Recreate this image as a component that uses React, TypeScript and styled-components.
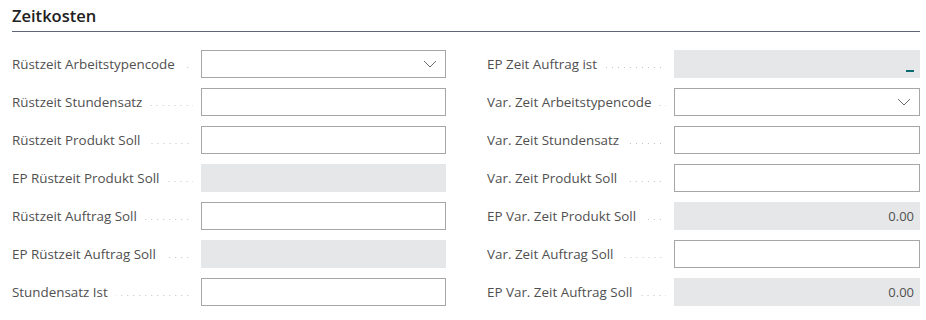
import React from "react";
import styled, { createGlobalStyle } from "styled-components";

const Global = createGlobalStyle`
  html, body { margin: 0; padding: 0; background: #ffffff; }
  body { font-family: "Segoe UI", "Open Sans", "Noto Sans", sans-serif; }
`;

const Page = styled.div`
  width: 926px;
  padding: 0 6px 0 12px;
  box-sizing: border-box;
`;

const Header = styled.div`
  padding-top: 5px;
  height: 26px;
  border-bottom: 1px solid #5c6675;
  box-sizing: content-box;
`;

const Title = styled.h2`
  margin: 0;
  font-size: 16.5px;
  font-weight: 600;
  color: #212121;
  line-height: 22px;
`;

const Columns = styled.div`
  display: grid;
  grid-template-columns: 434px 433px;
  column-gap: 41px;
  padding-top: 18px;
`;

const Column = styled.div`
  display: flex;
  flex-direction: column;
  gap: 10px;
`;

const Row = styled.div<{ $labelWidth: number }>`
  display: grid;
  grid-template-columns: ${(p) => p.$labelWidth}px 1fr;
  height: 28px;
  align-items: center;
`;

const Label = styled.div`
  display: flex;
  align-items: baseline;
  padding-right: 8px;
  font-size: 13.4px;
  color: #505050;
  white-space: nowrap;
  overflow: hidden;
`;

const LabelText = styled.span`
  flex: none;
`;

const Leader = styled.span`
  flex: 1;
  height: 1px;
  margin-left: 8px;
  background-image: linear-gradient(to right, #c2c2c2 1px, transparent 1px);
  background-size: 6px 1px;
  background-repeat: repeat-x;
  background-position: right bottom;
  align-self: center;
  transform: translateY(3px);
`;

const Field = styled.div<{ $disabled?: boolean }>`
  height: 28px;
  box-sizing: border-box;
  display: flex;
  align-items: center;
  justify-content: flex-end;
  padding: 0 6px;
  font-size: 13px;
  color: #505050;
  background: ${(p) => (p.$disabled ? "#e6e7e8" : "#ffffff")};
  border: ${(p) => (p.$disabled ? "none" : "1px solid #a6a6a6")};
`;

const Dash = styled.span`
  display: block;
  width: 8px;
  height: 2px;
  background: #0b6a73;
  margin-top: 14px;
`;

const Chevron = () => (
  <svg width="14" height="8" viewBox="0 0 14 8" style={{ marginRight: 2 }}>
    <path d="M1 1 L7 7 L13 1" fill="none" stroke="#6b6b6b" strokeWidth="1" />
  </svg>
);

type Kind = "input" | "select" | "disabled" | "value" | "dash";
type F = { label: string; kind: Kind; value?: string };

const left: F[] = [
  { label: "Rüstzeit Arbeitstypencode", kind: "select" },
  { label: "Rüstzeit Stundensatz", kind: "input" },
  { label: "Rüstzeit Produkt Soll", kind: "input" },
  { label: "EP Rüstzeit Produkt Soll", kind: "disabled" },
  { label: "Rüstzeit Auftrag Soll", kind: "input" },
  { label: "EP Rüstzeit Auftrag Soll", kind: "disabled" },
  { label: "Stundensatz Ist", kind: "input" },
];

const right: F[] = [
  { label: "EP Zeit Auftrag ist", kind: "dash" },
  { label: "Var. Zeit Arbeitstypencode", kind: "select" },
  { label: "Var. Zeit Stundensatz", kind: "input" },
  { label: "Var. Zeit Produkt Soll", kind: "input" },
  { label: "EP Var. Zeit Produkt Soll", kind: "value", value: "0.00" },
  { label: "Var. Zeit Auftrag Soll", kind: "input" },
  { label: "EP Var. Zeit Auftrag Soll", kind: "value", value: "0.00" },
];

const FieldRow = ({ f, labelWidth }: { f: F; labelWidth: number }) => {
  const disabled = f.kind === "disabled" || f.kind === "value" || f.kind === "dash";
  return (
    <Row $labelWidth={labelWidth}>
      <Label>
        <LabelText>{f.label}</LabelText>
        <Leader />
      </Label>
      <Field $disabled={disabled}>
        {f.kind === "select" && <Chevron />}
        {f.kind === "value" && f.value}
        {f.kind === "dash" && <Dash />}
      </Field>
    </Row>
  );
};

export default function App() {
  return (
    <>
      <Global />
      <Page>
        <Header>
          <Title>Zeitkosten</Title>
        </Header>
        <Columns>
          <Column>
            {left.map((f) => (
              <FieldRow key={f.label} f={f} labelWidth={189} />
            ))}
          </Column>
          <Column>
            {right.map((f) => (
              <FieldRow key={f.label} f={f} labelWidth={187} />
            ))}
          </Column>
        </Columns>
      </Page>
    </>
  );
}
